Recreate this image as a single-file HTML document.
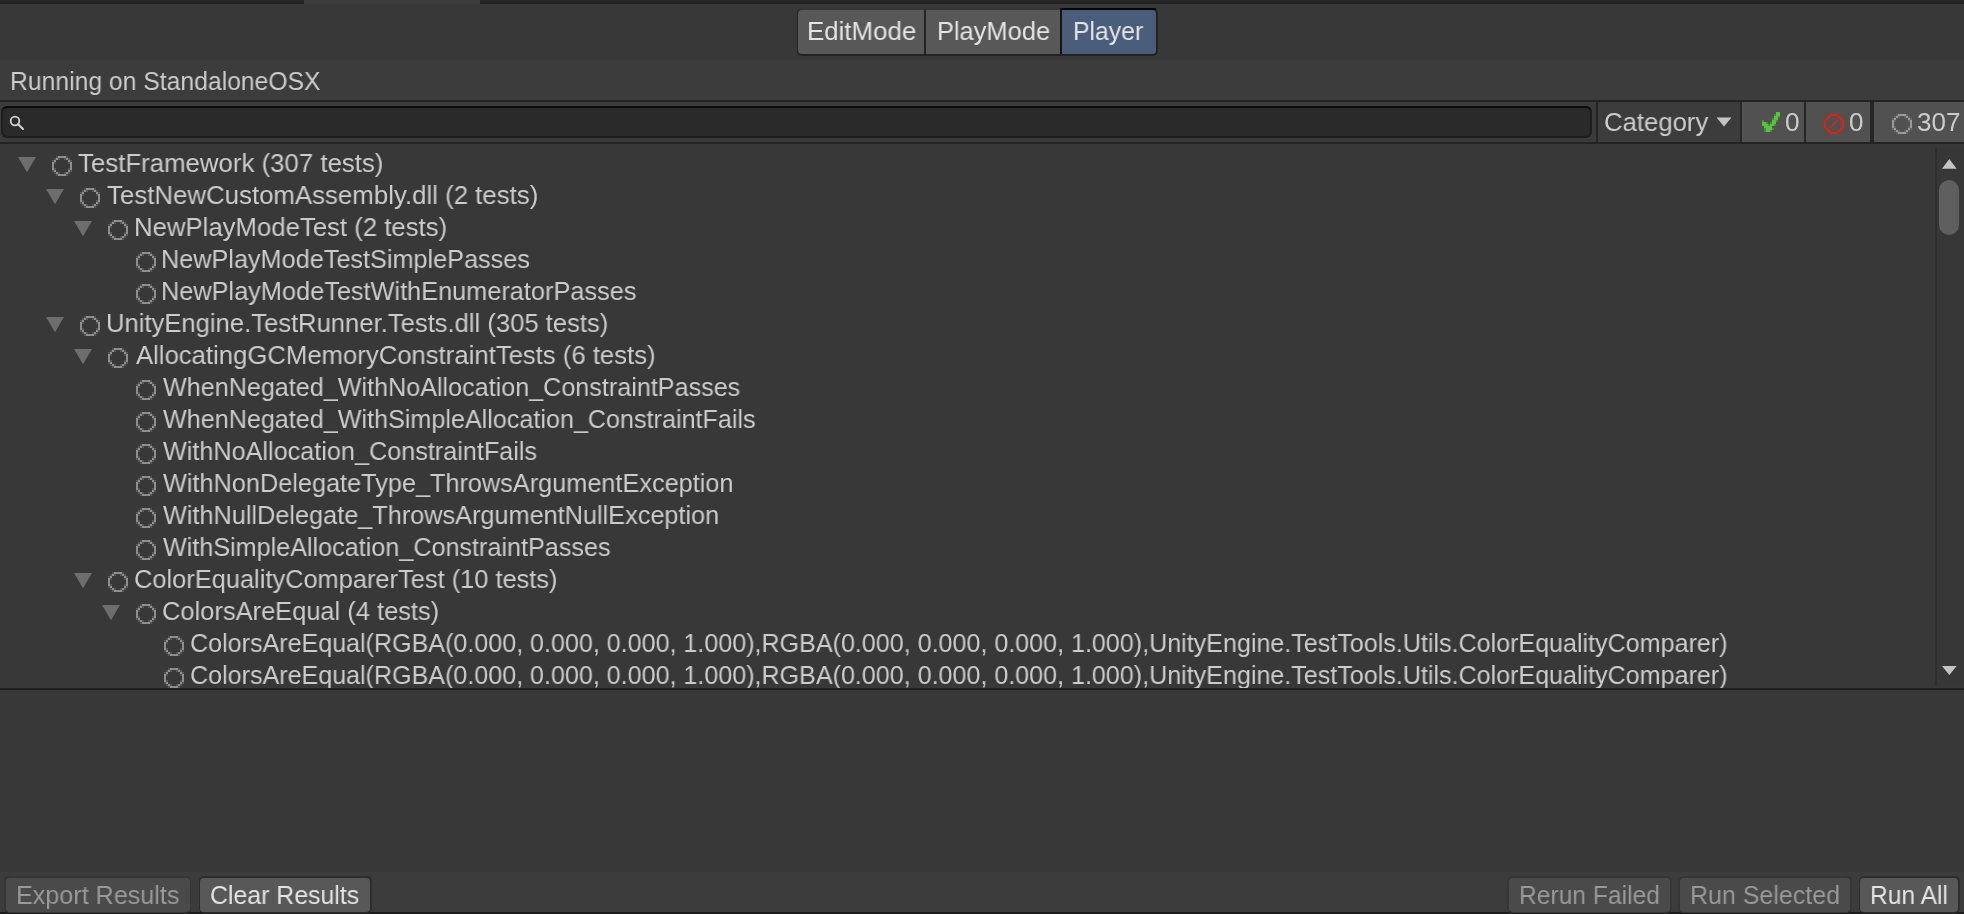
<!DOCTYPE html>
<html><head><meta charset="utf-8"><style>
html,body{margin:0;padding:0;width:1964px;height:914px;overflow:hidden;background:#383838;}
body{position:relative;font-family:"Liberation Sans",sans-serif;}
.b{position:absolute;}
.t{position:absolute;white-space:pre;will-change:transform;font-size:26px;line-height:32px;transform-origin:0 0;}
.ic{position:absolute;overflow:visible;}
</style></head><body>
<!-- top dock strip -->
<div class="b" style="left:0;top:0;width:1964px;height:2px;background:#282828"></div>
<div class="b" style="left:0;top:2px;width:1964px;height:2px;background:#212121"></div>
<div class="b" style="left:304px;top:0;width:176px;height:4px;background:#3c3c3c"></div>
<!-- running-on band -->
<div class="b" style="left:0;top:60px;width:1964px;height:40px;background:#3c3c3c"></div>
<!-- segmented control -->
<div class="b" style="left:797px;top:8px;width:361px;height:48px;background:#232323;border-radius:5px"></div>
<div class="b" style="left:798px;top:10px;width:126px;height:44px;background:#585858;border-radius:4px 0 0 4px"></div>
<div class="b" style="left:926px;top:10px;width:134px;height:44px;background:#585858"></div>
<div class="b" style="left:1062px;top:10px;width:94px;height:44px;background:#4a5e7b;border-radius:0 4px 4px 0"></div>
<div class="b" style="left:797px;top:8px;width:263px;height:2px;background:#353535"></div>
<div class="b" style="left:1060px;top:8px;width:96px;height:2px;background:#060606"></div>
<div class="b" style="left:1060px;top:8px;width:2px;height:46px;background:#141414"></div>
<!-- toolbar -->
<div class="b" style="left:0;top:100px;width:1964px;height:2px;background:#232323"></div>
<div class="b" style="left:0;top:102px;width:1964px;height:40px;background:#3b3b3b"></div>
<div class="b" style="left:0;top:142px;width:1964px;height:2px;background:#232323"></div>
<div class="b" style="left:1px;top:106px;width:1591px;height:32px;background:#1e1e1e;border-radius:6px;box-sizing:border-box;border-top:2px solid #0c0c0c"></div>
<div class="b" style="left:3px;top:108px;width:1587px;height:28px;background:#2a2a2a;border-radius:5px"></div>
<svg class="ic" style="left:0;top:100px" width="40" height="40"><circle cx="15" cy="21" r="4.3" fill="none" stroke="#d2d2d2" stroke-width="1.8"/><line x1="18.2" y1="24.2" x2="23" y2="29" stroke="#d2d2d2" stroke-width="2" stroke-linecap="round"/></svg>
<div class="b" style="left:1596px;top:102px;width:2px;height:40px;background:#262626"></div>
<div class="b" style="left:1598px;top:102px;width:142px;height:40px;background:#3c3c3c"></div>
<div class="b" style="left:1740px;top:102px;width:2px;height:40px;background:#262626"></div>
<div class="b" style="left:1742px;top:102px;width:62px;height:40px;background:#515151"></div>
<div class="b" style="left:1804px;top:102px;width:2px;height:40px;background:#262626"></div>
<div class="b" style="left:1806px;top:102px;width:64px;height:40px;background:#515151"></div>
<div class="b" style="left:1870px;top:102px;width:4px;height:40px;background:#262626"></div>
<div class="b" style="left:1874px;top:102px;width:90px;height:40px;background:#515151"></div>
<svg class="ic" style="left:1716px;top:117px" width="16" height="10"><polygon points="0.5,0.5 15.5,0.5 8,9.5" fill="#c4c4c4"/></svg>
<svg class="ic" style="left:1762px;top:112px" width="18" height="20" shape-rendering="crispEdges"><rect x="14" y="0" width="2" height="2" fill="#55c639"/><rect x="16" y="0" width="2" height="2" fill="#55c639"/><rect x="14" y="2" width="2" height="2" fill="#55c639"/><rect x="16" y="2" width="2" height="2" fill="#55c639"/><rect x="12" y="4" width="2" height="2" fill="#55c639"/><rect x="14" y="4" width="2" height="2" fill="#55c639"/><rect x="12" y="6" width="2" height="2" fill="#55c639"/><rect x="14" y="6" width="2" height="2" fill="#55c639"/><rect x="10" y="8" width="2" height="2" fill="#55c639"/><rect x="12" y="8" width="2" height="2" fill="#55c639"/><rect x="0" y="10" width="2" height="2" fill="#55c639"/><rect x="2" y="10" width="2" height="2" fill="#55c639"/><rect x="10" y="10" width="2" height="2" fill="#55c639"/><rect x="12" y="10" width="2" height="2" fill="#55c639"/><rect x="0" y="12" width="2" height="2" fill="#55c639"/><rect x="2" y="12" width="2" height="2" fill="#55c639"/><rect x="4" y="12" width="2" height="2" fill="#55c639"/><rect x="8" y="12" width="2" height="2" fill="#55c639"/><rect x="10" y="12" width="2" height="2" fill="#55c639"/><rect x="2" y="14" width="2" height="2" fill="#55c639"/><rect x="4" y="14" width="2" height="2" fill="#55c639"/><rect x="6" y="14" width="2" height="2" fill="#55c639"/><rect x="8" y="14" width="2" height="2" fill="#55c639"/><rect x="4" y="16" width="2" height="2" fill="#55c639"/><rect x="6" y="16" width="2" height="2" fill="#55c639"/><rect x="8" y="16" width="2" height="2" fill="#55c639"/><rect x="4" y="18" width="2" height="2" fill="#55c639"/><rect x="6" y="18" width="2" height="2" fill="#55c639"/><rect x="12" y="2" width="2" height="2" fill="#4c8a3e"/><rect x="16" y="4" width="2" height="2" fill="#4c8a3e"/><rect x="10" y="6" width="2" height="2" fill="#4c8a3e"/><rect x="0" y="8" width="2" height="2" fill="#4c8a3e"/><rect x="14" y="8" width="2" height="2" fill="#4c8a3e"/><rect x="4" y="10" width="2" height="2" fill="#4c8a3e"/><rect x="8" y="10" width="2" height="2" fill="#4c8a3e"/><rect x="6" y="12" width="2" height="2" fill="#4c8a3e"/><rect x="12" y="12" width="2" height="2" fill="#4c8a3e"/><rect x="2" y="16" width="2" height="2" fill="#4c8a3e"/><rect x="10" y="16" width="2" height="2" fill="#4c8a3e"/><rect x="2" y="18" width="2" height="2" fill="#4c8a3e"/><rect x="8" y="18" width="2" height="2" fill="#4c8a3e"/></svg>
<svg class="ic" style="left:1824px;top:114px" width="20" height="20" shape-rendering="crispEdges"><rect x="6" y="0" width="2" height="2" fill="#d3261a"/><rect x="8" y="0" width="2" height="2" fill="#d3261a"/><rect x="10" y="0" width="2" height="2" fill="#d3261a"/><rect x="12" y="0" width="2" height="2" fill="#d3261a"/><rect x="6" y="18" width="2" height="2" fill="#d3261a"/><rect x="8" y="18" width="2" height="2" fill="#d3261a"/><rect x="10" y="18" width="2" height="2" fill="#d3261a"/><rect x="12" y="18" width="2" height="2" fill="#d3261a"/><rect x="0" y="6" width="2" height="2" fill="#d3261a"/><rect x="0" y="8" width="2" height="2" fill="#d3261a"/><rect x="0" y="10" width="2" height="2" fill="#d3261a"/><rect x="0" y="12" width="2" height="2" fill="#d3261a"/><rect x="18" y="6" width="2" height="2" fill="#d3261a"/><rect x="18" y="8" width="2" height="2" fill="#d3261a"/><rect x="18" y="10" width="2" height="2" fill="#d3261a"/><rect x="18" y="12" width="2" height="2" fill="#d3261a"/><rect x="4" y="2" width="2" height="2" fill="#d3261a"/><rect x="14" y="2" width="2" height="2" fill="#d3261a"/><rect x="2" y="4" width="2" height="2" fill="#d3261a"/><rect x="16" y="4" width="2" height="2" fill="#d3261a"/><rect x="2" y="14" width="2" height="2" fill="#d3261a"/><rect x="16" y="14" width="2" height="2" fill="#d3261a"/><rect x="4" y="16" width="2" height="2" fill="#d3261a"/><rect x="14" y="16" width="2" height="2" fill="#d3261a"/><rect x="12" y="6" width="2" height="2" fill="#d3261a"/><rect x="10" y="8" width="2" height="2" fill="#d3261a"/><rect x="8" y="10" width="2" height="2" fill="#d3261a"/><rect x="6" y="12" width="2" height="2" fill="#d3261a"/><rect x="4" y="0" width="2" height="2" fill="#8e3a33"/><rect x="14" y="0" width="2" height="2" fill="#8e3a33"/><rect x="4" y="18" width="2" height="2" fill="#8e3a33"/><rect x="14" y="18" width="2" height="2" fill="#8e3a33"/><rect x="0" y="4" width="2" height="2" fill="#8e3a33"/><rect x="0" y="14" width="2" height="2" fill="#8e3a33"/><rect x="18" y="4" width="2" height="2" fill="#8e3a33"/><rect x="18" y="14" width="2" height="2" fill="#8e3a33"/><rect x="2" y="2" width="2" height="2" fill="#8e3a33"/><rect x="16" y="2" width="2" height="2" fill="#8e3a33"/><rect x="2" y="16" width="2" height="2" fill="#8e3a33"/><rect x="16" y="16" width="2" height="2" fill="#8e3a33"/><rect x="6" y="2" width="2" height="2" fill="#8e3a33"/><rect x="12" y="2" width="2" height="2" fill="#8e3a33"/><rect x="6" y="16" width="2" height="2" fill="#8e3a33"/><rect x="12" y="16" width="2" height="2" fill="#8e3a33"/><rect x="2" y="6" width="2" height="2" fill="#8e3a33"/><rect x="2" y="12" width="2" height="2" fill="#8e3a33"/><rect x="16" y="6" width="2" height="2" fill="#8e3a33"/><rect x="16" y="12" width="2" height="2" fill="#8e3a33"/></svg>
<svg class="ic" style="left:1892px;top:114px" width="20" height="20" shape-rendering="crispEdges"><rect x="6" y="0" width="2" height="2" fill="#9a9a9a"/><rect x="8" y="0" width="2" height="2" fill="#9a9a9a"/><rect x="10" y="0" width="2" height="2" fill="#9a9a9a"/><rect x="12" y="0" width="2" height="2" fill="#9a9a9a"/><rect x="6" y="18" width="2" height="2" fill="#9a9a9a"/><rect x="8" y="18" width="2" height="2" fill="#9a9a9a"/><rect x="10" y="18" width="2" height="2" fill="#9a9a9a"/><rect x="12" y="18" width="2" height="2" fill="#9a9a9a"/><rect x="0" y="6" width="2" height="2" fill="#9a9a9a"/><rect x="0" y="8" width="2" height="2" fill="#9a9a9a"/><rect x="0" y="10" width="2" height="2" fill="#9a9a9a"/><rect x="0" y="12" width="2" height="2" fill="#9a9a9a"/><rect x="18" y="6" width="2" height="2" fill="#9a9a9a"/><rect x="18" y="8" width="2" height="2" fill="#9a9a9a"/><rect x="18" y="10" width="2" height="2" fill="#9a9a9a"/><rect x="18" y="12" width="2" height="2" fill="#9a9a9a"/><rect x="4" y="2" width="2" height="2" fill="#9a9a9a"/><rect x="14" y="2" width="2" height="2" fill="#9a9a9a"/><rect x="2" y="4" width="2" height="2" fill="#9a9a9a"/><rect x="16" y="4" width="2" height="2" fill="#9a9a9a"/><rect x="2" y="14" width="2" height="2" fill="#9a9a9a"/><rect x="16" y="14" width="2" height="2" fill="#9a9a9a"/><rect x="4" y="16" width="2" height="2" fill="#9a9a9a"/><rect x="14" y="16" width="2" height="2" fill="#9a9a9a"/><rect x="4" y="0" width="2" height="2" fill="#666666"/><rect x="14" y="0" width="2" height="2" fill="#666666"/><rect x="4" y="18" width="2" height="2" fill="#666666"/><rect x="14" y="18" width="2" height="2" fill="#666666"/><rect x="0" y="4" width="2" height="2" fill="#666666"/><rect x="0" y="14" width="2" height="2" fill="#666666"/><rect x="18" y="4" width="2" height="2" fill="#666666"/><rect x="18" y="14" width="2" height="2" fill="#666666"/><rect x="2" y="2" width="2" height="2" fill="#666666"/><rect x="16" y="2" width="2" height="2" fill="#666666"/><rect x="2" y="16" width="2" height="2" fill="#666666"/><rect x="16" y="16" width="2" height="2" fill="#666666"/><rect x="6" y="2" width="2" height="2" fill="#666666"/><rect x="12" y="2" width="2" height="2" fill="#666666"/><rect x="6" y="16" width="2" height="2" fill="#666666"/><rect x="12" y="16" width="2" height="2" fill="#666666"/><rect x="2" y="6" width="2" height="2" fill="#666666"/><rect x="2" y="12" width="2" height="2" fill="#666666"/><rect x="16" y="6" width="2" height="2" fill="#666666"/><rect x="16" y="12" width="2" height="2" fill="#666666"/></svg>
<div class="t" style="left:807.31px;top:14.70px;color:#e4e4e4;transform:scaleX(0.9939);">EditMode</div><div class="t" style="left:937.44px;top:14.70px;color:#e4e4e4;transform:scaleX(0.9778);">PlayMode</div><div class="t" style="left:1073.29px;top:14.70px;color:#e4e4e4;transform:scaleX(0.9530);">Player</div><div class="t" style="left:10.00px;top:64.60px;color:#cccccc;transform:scaleX(0.9506);">Running on StandaloneOSX</div><div class="t" style="left:1603.76px;top:105.90px;color:#cccccc;transform:scaleX(0.9880);">Category</div><div class="t" style="left:1784.99px;top:105.90px;color:#cccccc;transform:scaleX(1.0080);">0</div><div class="t" style="left:1848.71px;top:105.90px;color:#cccccc;transform:scaleX(0.9920);">0</div><div class="t" style="left:1916.60px;top:105.90px;color:#cccccc;transform:scaleX(0.9964);">307</div>
<!-- tree -->
<div class="b" style="left:0;top:144px;width:1964px;height:544px;background:#383838;overflow:hidden">
</div>
<div class="b" style="left:0;top:144px;width:1935px;height:544px;overflow:hidden">
<div style="position:absolute;left:0;top:-144px;width:1964px;height:914px">
<div class="t" style="left:78.30px;top:146.70px;color:#cccccc;transform:scaleX(0.9925);">TestFramework (307 tests)</div><svg class="ic" style="left:52px;top:156px" width="20" height="20" shape-rendering="crispEdges"><rect x="6" y="0" width="2" height="2" fill="#8e8e8e"/><rect x="8" y="0" width="2" height="2" fill="#8e8e8e"/><rect x="10" y="0" width="2" height="2" fill="#8e8e8e"/><rect x="12" y="0" width="2" height="2" fill="#8e8e8e"/><rect x="6" y="18" width="2" height="2" fill="#8e8e8e"/><rect x="8" y="18" width="2" height="2" fill="#8e8e8e"/><rect x="10" y="18" width="2" height="2" fill="#8e8e8e"/><rect x="12" y="18" width="2" height="2" fill="#8e8e8e"/><rect x="0" y="6" width="2" height="2" fill="#8e8e8e"/><rect x="0" y="8" width="2" height="2" fill="#8e8e8e"/><rect x="0" y="10" width="2" height="2" fill="#8e8e8e"/><rect x="0" y="12" width="2" height="2" fill="#8e8e8e"/><rect x="18" y="6" width="2" height="2" fill="#8e8e8e"/><rect x="18" y="8" width="2" height="2" fill="#8e8e8e"/><rect x="18" y="10" width="2" height="2" fill="#8e8e8e"/><rect x="18" y="12" width="2" height="2" fill="#8e8e8e"/><rect x="4" y="2" width="2" height="2" fill="#8e8e8e"/><rect x="14" y="2" width="2" height="2" fill="#8e8e8e"/><rect x="2" y="4" width="2" height="2" fill="#8e8e8e"/><rect x="16" y="4" width="2" height="2" fill="#8e8e8e"/><rect x="2" y="14" width="2" height="2" fill="#8e8e8e"/><rect x="16" y="14" width="2" height="2" fill="#8e8e8e"/><rect x="4" y="16" width="2" height="2" fill="#8e8e8e"/><rect x="14" y="16" width="2" height="2" fill="#8e8e8e"/><rect x="4" y="0" width="2" height="2" fill="#555555"/><rect x="14" y="0" width="2" height="2" fill="#555555"/><rect x="4" y="18" width="2" height="2" fill="#555555"/><rect x="14" y="18" width="2" height="2" fill="#555555"/><rect x="0" y="4" width="2" height="2" fill="#555555"/><rect x="0" y="14" width="2" height="2" fill="#555555"/><rect x="18" y="4" width="2" height="2" fill="#555555"/><rect x="18" y="14" width="2" height="2" fill="#555555"/><rect x="2" y="2" width="2" height="2" fill="#555555"/><rect x="16" y="2" width="2" height="2" fill="#555555"/><rect x="2" y="16" width="2" height="2" fill="#555555"/><rect x="16" y="16" width="2" height="2" fill="#555555"/><rect x="6" y="2" width="2" height="2" fill="#555555"/><rect x="12" y="2" width="2" height="2" fill="#555555"/><rect x="6" y="16" width="2" height="2" fill="#555555"/><rect x="12" y="16" width="2" height="2" fill="#555555"/><rect x="2" y="6" width="2" height="2" fill="#555555"/><rect x="2" y="12" width="2" height="2" fill="#555555"/><rect x="16" y="6" width="2" height="2" fill="#555555"/><rect x="16" y="12" width="2" height="2" fill="#555555"/></svg><svg class="ic" style="left:18px;top:157.0px" width="18" height="16"><polygon points="0,0 18,0 9,15.3" fill="#6d6d6d"/></svg><div class="t" style="left:107.30px;top:178.70px;color:#cccccc;transform:scaleX(0.9929);">TestNewCustomAssembly.dll (2 tests)</div><svg class="ic" style="left:80px;top:188px" width="20" height="20" shape-rendering="crispEdges"><rect x="6" y="0" width="2" height="2" fill="#8e8e8e"/><rect x="8" y="0" width="2" height="2" fill="#8e8e8e"/><rect x="10" y="0" width="2" height="2" fill="#8e8e8e"/><rect x="12" y="0" width="2" height="2" fill="#8e8e8e"/><rect x="6" y="18" width="2" height="2" fill="#8e8e8e"/><rect x="8" y="18" width="2" height="2" fill="#8e8e8e"/><rect x="10" y="18" width="2" height="2" fill="#8e8e8e"/><rect x="12" y="18" width="2" height="2" fill="#8e8e8e"/><rect x="0" y="6" width="2" height="2" fill="#8e8e8e"/><rect x="0" y="8" width="2" height="2" fill="#8e8e8e"/><rect x="0" y="10" width="2" height="2" fill="#8e8e8e"/><rect x="0" y="12" width="2" height="2" fill="#8e8e8e"/><rect x="18" y="6" width="2" height="2" fill="#8e8e8e"/><rect x="18" y="8" width="2" height="2" fill="#8e8e8e"/><rect x="18" y="10" width="2" height="2" fill="#8e8e8e"/><rect x="18" y="12" width="2" height="2" fill="#8e8e8e"/><rect x="4" y="2" width="2" height="2" fill="#8e8e8e"/><rect x="14" y="2" width="2" height="2" fill="#8e8e8e"/><rect x="2" y="4" width="2" height="2" fill="#8e8e8e"/><rect x="16" y="4" width="2" height="2" fill="#8e8e8e"/><rect x="2" y="14" width="2" height="2" fill="#8e8e8e"/><rect x="16" y="14" width="2" height="2" fill="#8e8e8e"/><rect x="4" y="16" width="2" height="2" fill="#8e8e8e"/><rect x="14" y="16" width="2" height="2" fill="#8e8e8e"/><rect x="4" y="0" width="2" height="2" fill="#555555"/><rect x="14" y="0" width="2" height="2" fill="#555555"/><rect x="4" y="18" width="2" height="2" fill="#555555"/><rect x="14" y="18" width="2" height="2" fill="#555555"/><rect x="0" y="4" width="2" height="2" fill="#555555"/><rect x="0" y="14" width="2" height="2" fill="#555555"/><rect x="18" y="4" width="2" height="2" fill="#555555"/><rect x="18" y="14" width="2" height="2" fill="#555555"/><rect x="2" y="2" width="2" height="2" fill="#555555"/><rect x="16" y="2" width="2" height="2" fill="#555555"/><rect x="2" y="16" width="2" height="2" fill="#555555"/><rect x="16" y="16" width="2" height="2" fill="#555555"/><rect x="6" y="2" width="2" height="2" fill="#555555"/><rect x="12" y="2" width="2" height="2" fill="#555555"/><rect x="6" y="16" width="2" height="2" fill="#555555"/><rect x="12" y="16" width="2" height="2" fill="#555555"/><rect x="2" y="6" width="2" height="2" fill="#555555"/><rect x="2" y="12" width="2" height="2" fill="#555555"/><rect x="16" y="6" width="2" height="2" fill="#555555"/><rect x="16" y="12" width="2" height="2" fill="#555555"/></svg><svg class="ic" style="left:46px;top:189.0px" width="18" height="16"><polygon points="0,0 18,0 9,15.3" fill="#6d6d6d"/></svg><div class="t" style="left:133.52px;top:210.70px;color:#cccccc;transform:scaleX(0.9896);">NewPlayModeTest (2 tests)</div><svg class="ic" style="left:108px;top:220px" width="20" height="20" shape-rendering="crispEdges"><rect x="6" y="0" width="2" height="2" fill="#8e8e8e"/><rect x="8" y="0" width="2" height="2" fill="#8e8e8e"/><rect x="10" y="0" width="2" height="2" fill="#8e8e8e"/><rect x="12" y="0" width="2" height="2" fill="#8e8e8e"/><rect x="6" y="18" width="2" height="2" fill="#8e8e8e"/><rect x="8" y="18" width="2" height="2" fill="#8e8e8e"/><rect x="10" y="18" width="2" height="2" fill="#8e8e8e"/><rect x="12" y="18" width="2" height="2" fill="#8e8e8e"/><rect x="0" y="6" width="2" height="2" fill="#8e8e8e"/><rect x="0" y="8" width="2" height="2" fill="#8e8e8e"/><rect x="0" y="10" width="2" height="2" fill="#8e8e8e"/><rect x="0" y="12" width="2" height="2" fill="#8e8e8e"/><rect x="18" y="6" width="2" height="2" fill="#8e8e8e"/><rect x="18" y="8" width="2" height="2" fill="#8e8e8e"/><rect x="18" y="10" width="2" height="2" fill="#8e8e8e"/><rect x="18" y="12" width="2" height="2" fill="#8e8e8e"/><rect x="4" y="2" width="2" height="2" fill="#8e8e8e"/><rect x="14" y="2" width="2" height="2" fill="#8e8e8e"/><rect x="2" y="4" width="2" height="2" fill="#8e8e8e"/><rect x="16" y="4" width="2" height="2" fill="#8e8e8e"/><rect x="2" y="14" width="2" height="2" fill="#8e8e8e"/><rect x="16" y="14" width="2" height="2" fill="#8e8e8e"/><rect x="4" y="16" width="2" height="2" fill="#8e8e8e"/><rect x="14" y="16" width="2" height="2" fill="#8e8e8e"/><rect x="4" y="0" width="2" height="2" fill="#555555"/><rect x="14" y="0" width="2" height="2" fill="#555555"/><rect x="4" y="18" width="2" height="2" fill="#555555"/><rect x="14" y="18" width="2" height="2" fill="#555555"/><rect x="0" y="4" width="2" height="2" fill="#555555"/><rect x="0" y="14" width="2" height="2" fill="#555555"/><rect x="18" y="4" width="2" height="2" fill="#555555"/><rect x="18" y="14" width="2" height="2" fill="#555555"/><rect x="2" y="2" width="2" height="2" fill="#555555"/><rect x="16" y="2" width="2" height="2" fill="#555555"/><rect x="2" y="16" width="2" height="2" fill="#555555"/><rect x="16" y="16" width="2" height="2" fill="#555555"/><rect x="6" y="2" width="2" height="2" fill="#555555"/><rect x="12" y="2" width="2" height="2" fill="#555555"/><rect x="6" y="16" width="2" height="2" fill="#555555"/><rect x="12" y="16" width="2" height="2" fill="#555555"/><rect x="2" y="6" width="2" height="2" fill="#555555"/><rect x="2" y="12" width="2" height="2" fill="#555555"/><rect x="16" y="6" width="2" height="2" fill="#555555"/><rect x="16" y="12" width="2" height="2" fill="#555555"/></svg><svg class="ic" style="left:74px;top:221.0px" width="18" height="16"><polygon points="0,0 18,0 9,15.3" fill="#6d6d6d"/></svg><div class="t" style="left:160.86px;top:242.70px;color:#cccccc;transform:scaleX(0.9708);">NewPlayModeTestSimplePasses</div><svg class="ic" style="left:136px;top:252px" width="20" height="20" shape-rendering="crispEdges"><rect x="6" y="0" width="2" height="2" fill="#8e8e8e"/><rect x="8" y="0" width="2" height="2" fill="#8e8e8e"/><rect x="10" y="0" width="2" height="2" fill="#8e8e8e"/><rect x="12" y="0" width="2" height="2" fill="#8e8e8e"/><rect x="6" y="18" width="2" height="2" fill="#8e8e8e"/><rect x="8" y="18" width="2" height="2" fill="#8e8e8e"/><rect x="10" y="18" width="2" height="2" fill="#8e8e8e"/><rect x="12" y="18" width="2" height="2" fill="#8e8e8e"/><rect x="0" y="6" width="2" height="2" fill="#8e8e8e"/><rect x="0" y="8" width="2" height="2" fill="#8e8e8e"/><rect x="0" y="10" width="2" height="2" fill="#8e8e8e"/><rect x="0" y="12" width="2" height="2" fill="#8e8e8e"/><rect x="18" y="6" width="2" height="2" fill="#8e8e8e"/><rect x="18" y="8" width="2" height="2" fill="#8e8e8e"/><rect x="18" y="10" width="2" height="2" fill="#8e8e8e"/><rect x="18" y="12" width="2" height="2" fill="#8e8e8e"/><rect x="4" y="2" width="2" height="2" fill="#8e8e8e"/><rect x="14" y="2" width="2" height="2" fill="#8e8e8e"/><rect x="2" y="4" width="2" height="2" fill="#8e8e8e"/><rect x="16" y="4" width="2" height="2" fill="#8e8e8e"/><rect x="2" y="14" width="2" height="2" fill="#8e8e8e"/><rect x="16" y="14" width="2" height="2" fill="#8e8e8e"/><rect x="4" y="16" width="2" height="2" fill="#8e8e8e"/><rect x="14" y="16" width="2" height="2" fill="#8e8e8e"/><rect x="4" y="0" width="2" height="2" fill="#555555"/><rect x="14" y="0" width="2" height="2" fill="#555555"/><rect x="4" y="18" width="2" height="2" fill="#555555"/><rect x="14" y="18" width="2" height="2" fill="#555555"/><rect x="0" y="4" width="2" height="2" fill="#555555"/><rect x="0" y="14" width="2" height="2" fill="#555555"/><rect x="18" y="4" width="2" height="2" fill="#555555"/><rect x="18" y="14" width="2" height="2" fill="#555555"/><rect x="2" y="2" width="2" height="2" fill="#555555"/><rect x="16" y="2" width="2" height="2" fill="#555555"/><rect x="2" y="16" width="2" height="2" fill="#555555"/><rect x="16" y="16" width="2" height="2" fill="#555555"/><rect x="6" y="2" width="2" height="2" fill="#555555"/><rect x="12" y="2" width="2" height="2" fill="#555555"/><rect x="6" y="16" width="2" height="2" fill="#555555"/><rect x="12" y="16" width="2" height="2" fill="#555555"/><rect x="2" y="6" width="2" height="2" fill="#555555"/><rect x="2" y="12" width="2" height="2" fill="#555555"/><rect x="16" y="6" width="2" height="2" fill="#555555"/><rect x="16" y="12" width="2" height="2" fill="#555555"/></svg><div class="t" style="left:160.85px;top:274.70px;color:#cccccc;transform:scaleX(0.9734);">NewPlayModeTestWithEnumeratorPasses</div><svg class="ic" style="left:136px;top:284px" width="20" height="20" shape-rendering="crispEdges"><rect x="6" y="0" width="2" height="2" fill="#8e8e8e"/><rect x="8" y="0" width="2" height="2" fill="#8e8e8e"/><rect x="10" y="0" width="2" height="2" fill="#8e8e8e"/><rect x="12" y="0" width="2" height="2" fill="#8e8e8e"/><rect x="6" y="18" width="2" height="2" fill="#8e8e8e"/><rect x="8" y="18" width="2" height="2" fill="#8e8e8e"/><rect x="10" y="18" width="2" height="2" fill="#8e8e8e"/><rect x="12" y="18" width="2" height="2" fill="#8e8e8e"/><rect x="0" y="6" width="2" height="2" fill="#8e8e8e"/><rect x="0" y="8" width="2" height="2" fill="#8e8e8e"/><rect x="0" y="10" width="2" height="2" fill="#8e8e8e"/><rect x="0" y="12" width="2" height="2" fill="#8e8e8e"/><rect x="18" y="6" width="2" height="2" fill="#8e8e8e"/><rect x="18" y="8" width="2" height="2" fill="#8e8e8e"/><rect x="18" y="10" width="2" height="2" fill="#8e8e8e"/><rect x="18" y="12" width="2" height="2" fill="#8e8e8e"/><rect x="4" y="2" width="2" height="2" fill="#8e8e8e"/><rect x="14" y="2" width="2" height="2" fill="#8e8e8e"/><rect x="2" y="4" width="2" height="2" fill="#8e8e8e"/><rect x="16" y="4" width="2" height="2" fill="#8e8e8e"/><rect x="2" y="14" width="2" height="2" fill="#8e8e8e"/><rect x="16" y="14" width="2" height="2" fill="#8e8e8e"/><rect x="4" y="16" width="2" height="2" fill="#8e8e8e"/><rect x="14" y="16" width="2" height="2" fill="#8e8e8e"/><rect x="4" y="0" width="2" height="2" fill="#555555"/><rect x="14" y="0" width="2" height="2" fill="#555555"/><rect x="4" y="18" width="2" height="2" fill="#555555"/><rect x="14" y="18" width="2" height="2" fill="#555555"/><rect x="0" y="4" width="2" height="2" fill="#555555"/><rect x="0" y="14" width="2" height="2" fill="#555555"/><rect x="18" y="4" width="2" height="2" fill="#555555"/><rect x="18" y="14" width="2" height="2" fill="#555555"/><rect x="2" y="2" width="2" height="2" fill="#555555"/><rect x="16" y="2" width="2" height="2" fill="#555555"/><rect x="2" y="16" width="2" height="2" fill="#555555"/><rect x="16" y="16" width="2" height="2" fill="#555555"/><rect x="6" y="2" width="2" height="2" fill="#555555"/><rect x="12" y="2" width="2" height="2" fill="#555555"/><rect x="6" y="16" width="2" height="2" fill="#555555"/><rect x="12" y="16" width="2" height="2" fill="#555555"/><rect x="2" y="6" width="2" height="2" fill="#555555"/><rect x="2" y="12" width="2" height="2" fill="#555555"/><rect x="16" y="6" width="2" height="2" fill="#555555"/><rect x="16" y="12" width="2" height="2" fill="#555555"/></svg><div class="t" style="left:105.83px;top:306.70px;color:#cccccc;transform:scaleX(0.9846);">UnityEngine.TestRunner.Tests.dll (305 tests)</div><svg class="ic" style="left:80px;top:316px" width="20" height="20" shape-rendering="crispEdges"><rect x="6" y="0" width="2" height="2" fill="#8e8e8e"/><rect x="8" y="0" width="2" height="2" fill="#8e8e8e"/><rect x="10" y="0" width="2" height="2" fill="#8e8e8e"/><rect x="12" y="0" width="2" height="2" fill="#8e8e8e"/><rect x="6" y="18" width="2" height="2" fill="#8e8e8e"/><rect x="8" y="18" width="2" height="2" fill="#8e8e8e"/><rect x="10" y="18" width="2" height="2" fill="#8e8e8e"/><rect x="12" y="18" width="2" height="2" fill="#8e8e8e"/><rect x="0" y="6" width="2" height="2" fill="#8e8e8e"/><rect x="0" y="8" width="2" height="2" fill="#8e8e8e"/><rect x="0" y="10" width="2" height="2" fill="#8e8e8e"/><rect x="0" y="12" width="2" height="2" fill="#8e8e8e"/><rect x="18" y="6" width="2" height="2" fill="#8e8e8e"/><rect x="18" y="8" width="2" height="2" fill="#8e8e8e"/><rect x="18" y="10" width="2" height="2" fill="#8e8e8e"/><rect x="18" y="12" width="2" height="2" fill="#8e8e8e"/><rect x="4" y="2" width="2" height="2" fill="#8e8e8e"/><rect x="14" y="2" width="2" height="2" fill="#8e8e8e"/><rect x="2" y="4" width="2" height="2" fill="#8e8e8e"/><rect x="16" y="4" width="2" height="2" fill="#8e8e8e"/><rect x="2" y="14" width="2" height="2" fill="#8e8e8e"/><rect x="16" y="14" width="2" height="2" fill="#8e8e8e"/><rect x="4" y="16" width="2" height="2" fill="#8e8e8e"/><rect x="14" y="16" width="2" height="2" fill="#8e8e8e"/><rect x="4" y="0" width="2" height="2" fill="#555555"/><rect x="14" y="0" width="2" height="2" fill="#555555"/><rect x="4" y="18" width="2" height="2" fill="#555555"/><rect x="14" y="18" width="2" height="2" fill="#555555"/><rect x="0" y="4" width="2" height="2" fill="#555555"/><rect x="0" y="14" width="2" height="2" fill="#555555"/><rect x="18" y="4" width="2" height="2" fill="#555555"/><rect x="18" y="14" width="2" height="2" fill="#555555"/><rect x="2" y="2" width="2" height="2" fill="#555555"/><rect x="16" y="2" width="2" height="2" fill="#555555"/><rect x="2" y="16" width="2" height="2" fill="#555555"/><rect x="16" y="16" width="2" height="2" fill="#555555"/><rect x="6" y="2" width="2" height="2" fill="#555555"/><rect x="12" y="2" width="2" height="2" fill="#555555"/><rect x="6" y="16" width="2" height="2" fill="#555555"/><rect x="12" y="16" width="2" height="2" fill="#555555"/><rect x="2" y="6" width="2" height="2" fill="#555555"/><rect x="2" y="12" width="2" height="2" fill="#555555"/><rect x="16" y="6" width="2" height="2" fill="#555555"/><rect x="16" y="12" width="2" height="2" fill="#555555"/></svg><svg class="ic" style="left:46px;top:317.0px" width="18" height="16"><polygon points="0,0 18,0 9,15.3" fill="#6d6d6d"/></svg><div class="t" style="left:135.50px;top:338.70px;color:#cccccc;transform:scaleX(0.9879);">AllocatingGCMemoryConstraintTests (6 tests)</div><svg class="ic" style="left:108px;top:348px" width="20" height="20" shape-rendering="crispEdges"><rect x="6" y="0" width="2" height="2" fill="#8e8e8e"/><rect x="8" y="0" width="2" height="2" fill="#8e8e8e"/><rect x="10" y="0" width="2" height="2" fill="#8e8e8e"/><rect x="12" y="0" width="2" height="2" fill="#8e8e8e"/><rect x="6" y="18" width="2" height="2" fill="#8e8e8e"/><rect x="8" y="18" width="2" height="2" fill="#8e8e8e"/><rect x="10" y="18" width="2" height="2" fill="#8e8e8e"/><rect x="12" y="18" width="2" height="2" fill="#8e8e8e"/><rect x="0" y="6" width="2" height="2" fill="#8e8e8e"/><rect x="0" y="8" width="2" height="2" fill="#8e8e8e"/><rect x="0" y="10" width="2" height="2" fill="#8e8e8e"/><rect x="0" y="12" width="2" height="2" fill="#8e8e8e"/><rect x="18" y="6" width="2" height="2" fill="#8e8e8e"/><rect x="18" y="8" width="2" height="2" fill="#8e8e8e"/><rect x="18" y="10" width="2" height="2" fill="#8e8e8e"/><rect x="18" y="12" width="2" height="2" fill="#8e8e8e"/><rect x="4" y="2" width="2" height="2" fill="#8e8e8e"/><rect x="14" y="2" width="2" height="2" fill="#8e8e8e"/><rect x="2" y="4" width="2" height="2" fill="#8e8e8e"/><rect x="16" y="4" width="2" height="2" fill="#8e8e8e"/><rect x="2" y="14" width="2" height="2" fill="#8e8e8e"/><rect x="16" y="14" width="2" height="2" fill="#8e8e8e"/><rect x="4" y="16" width="2" height="2" fill="#8e8e8e"/><rect x="14" y="16" width="2" height="2" fill="#8e8e8e"/><rect x="4" y="0" width="2" height="2" fill="#555555"/><rect x="14" y="0" width="2" height="2" fill="#555555"/><rect x="4" y="18" width="2" height="2" fill="#555555"/><rect x="14" y="18" width="2" height="2" fill="#555555"/><rect x="0" y="4" width="2" height="2" fill="#555555"/><rect x="0" y="14" width="2" height="2" fill="#555555"/><rect x="18" y="4" width="2" height="2" fill="#555555"/><rect x="18" y="14" width="2" height="2" fill="#555555"/><rect x="2" y="2" width="2" height="2" fill="#555555"/><rect x="16" y="2" width="2" height="2" fill="#555555"/><rect x="2" y="16" width="2" height="2" fill="#555555"/><rect x="16" y="16" width="2" height="2" fill="#555555"/><rect x="6" y="2" width="2" height="2" fill="#555555"/><rect x="12" y="2" width="2" height="2" fill="#555555"/><rect x="6" y="16" width="2" height="2" fill="#555555"/><rect x="12" y="16" width="2" height="2" fill="#555555"/><rect x="2" y="6" width="2" height="2" fill="#555555"/><rect x="2" y="12" width="2" height="2" fill="#555555"/><rect x="16" y="6" width="2" height="2" fill="#555555"/><rect x="16" y="12" width="2" height="2" fill="#555555"/></svg><svg class="ic" style="left:74px;top:349.0px" width="18" height="16"><polygon points="0,0 18,0 9,15.3" fill="#6d6d6d"/></svg><div class="t" style="left:162.80px;top:370.70px;color:#cccccc;transform:scaleX(0.9671);">WhenNegated_WithNoAllocation_ConstraintPasses</div><svg class="ic" style="left:136px;top:380px" width="20" height="20" shape-rendering="crispEdges"><rect x="6" y="0" width="2" height="2" fill="#8e8e8e"/><rect x="8" y="0" width="2" height="2" fill="#8e8e8e"/><rect x="10" y="0" width="2" height="2" fill="#8e8e8e"/><rect x="12" y="0" width="2" height="2" fill="#8e8e8e"/><rect x="6" y="18" width="2" height="2" fill="#8e8e8e"/><rect x="8" y="18" width="2" height="2" fill="#8e8e8e"/><rect x="10" y="18" width="2" height="2" fill="#8e8e8e"/><rect x="12" y="18" width="2" height="2" fill="#8e8e8e"/><rect x="0" y="6" width="2" height="2" fill="#8e8e8e"/><rect x="0" y="8" width="2" height="2" fill="#8e8e8e"/><rect x="0" y="10" width="2" height="2" fill="#8e8e8e"/><rect x="0" y="12" width="2" height="2" fill="#8e8e8e"/><rect x="18" y="6" width="2" height="2" fill="#8e8e8e"/><rect x="18" y="8" width="2" height="2" fill="#8e8e8e"/><rect x="18" y="10" width="2" height="2" fill="#8e8e8e"/><rect x="18" y="12" width="2" height="2" fill="#8e8e8e"/><rect x="4" y="2" width="2" height="2" fill="#8e8e8e"/><rect x="14" y="2" width="2" height="2" fill="#8e8e8e"/><rect x="2" y="4" width="2" height="2" fill="#8e8e8e"/><rect x="16" y="4" width="2" height="2" fill="#8e8e8e"/><rect x="2" y="14" width="2" height="2" fill="#8e8e8e"/><rect x="16" y="14" width="2" height="2" fill="#8e8e8e"/><rect x="4" y="16" width="2" height="2" fill="#8e8e8e"/><rect x="14" y="16" width="2" height="2" fill="#8e8e8e"/><rect x="4" y="0" width="2" height="2" fill="#555555"/><rect x="14" y="0" width="2" height="2" fill="#555555"/><rect x="4" y="18" width="2" height="2" fill="#555555"/><rect x="14" y="18" width="2" height="2" fill="#555555"/><rect x="0" y="4" width="2" height="2" fill="#555555"/><rect x="0" y="14" width="2" height="2" fill="#555555"/><rect x="18" y="4" width="2" height="2" fill="#555555"/><rect x="18" y="14" width="2" height="2" fill="#555555"/><rect x="2" y="2" width="2" height="2" fill="#555555"/><rect x="16" y="2" width="2" height="2" fill="#555555"/><rect x="2" y="16" width="2" height="2" fill="#555555"/><rect x="16" y="16" width="2" height="2" fill="#555555"/><rect x="6" y="2" width="2" height="2" fill="#555555"/><rect x="12" y="2" width="2" height="2" fill="#555555"/><rect x="6" y="16" width="2" height="2" fill="#555555"/><rect x="12" y="16" width="2" height="2" fill="#555555"/><rect x="2" y="6" width="2" height="2" fill="#555555"/><rect x="2" y="12" width="2" height="2" fill="#555555"/><rect x="16" y="6" width="2" height="2" fill="#555555"/><rect x="16" y="12" width="2" height="2" fill="#555555"/></svg><div class="t" style="left:162.80px;top:402.70px;color:#cccccc;transform:scaleX(0.9671);">WhenNegated_WithSimpleAllocation_ConstraintFails</div><svg class="ic" style="left:136px;top:412px" width="20" height="20" shape-rendering="crispEdges"><rect x="6" y="0" width="2" height="2" fill="#8e8e8e"/><rect x="8" y="0" width="2" height="2" fill="#8e8e8e"/><rect x="10" y="0" width="2" height="2" fill="#8e8e8e"/><rect x="12" y="0" width="2" height="2" fill="#8e8e8e"/><rect x="6" y="18" width="2" height="2" fill="#8e8e8e"/><rect x="8" y="18" width="2" height="2" fill="#8e8e8e"/><rect x="10" y="18" width="2" height="2" fill="#8e8e8e"/><rect x="12" y="18" width="2" height="2" fill="#8e8e8e"/><rect x="0" y="6" width="2" height="2" fill="#8e8e8e"/><rect x="0" y="8" width="2" height="2" fill="#8e8e8e"/><rect x="0" y="10" width="2" height="2" fill="#8e8e8e"/><rect x="0" y="12" width="2" height="2" fill="#8e8e8e"/><rect x="18" y="6" width="2" height="2" fill="#8e8e8e"/><rect x="18" y="8" width="2" height="2" fill="#8e8e8e"/><rect x="18" y="10" width="2" height="2" fill="#8e8e8e"/><rect x="18" y="12" width="2" height="2" fill="#8e8e8e"/><rect x="4" y="2" width="2" height="2" fill="#8e8e8e"/><rect x="14" y="2" width="2" height="2" fill="#8e8e8e"/><rect x="2" y="4" width="2" height="2" fill="#8e8e8e"/><rect x="16" y="4" width="2" height="2" fill="#8e8e8e"/><rect x="2" y="14" width="2" height="2" fill="#8e8e8e"/><rect x="16" y="14" width="2" height="2" fill="#8e8e8e"/><rect x="4" y="16" width="2" height="2" fill="#8e8e8e"/><rect x="14" y="16" width="2" height="2" fill="#8e8e8e"/><rect x="4" y="0" width="2" height="2" fill="#555555"/><rect x="14" y="0" width="2" height="2" fill="#555555"/><rect x="4" y="18" width="2" height="2" fill="#555555"/><rect x="14" y="18" width="2" height="2" fill="#555555"/><rect x="0" y="4" width="2" height="2" fill="#555555"/><rect x="0" y="14" width="2" height="2" fill="#555555"/><rect x="18" y="4" width="2" height="2" fill="#555555"/><rect x="18" y="14" width="2" height="2" fill="#555555"/><rect x="2" y="2" width="2" height="2" fill="#555555"/><rect x="16" y="2" width="2" height="2" fill="#555555"/><rect x="2" y="16" width="2" height="2" fill="#555555"/><rect x="16" y="16" width="2" height="2" fill="#555555"/><rect x="6" y="2" width="2" height="2" fill="#555555"/><rect x="12" y="2" width="2" height="2" fill="#555555"/><rect x="6" y="16" width="2" height="2" fill="#555555"/><rect x="12" y="16" width="2" height="2" fill="#555555"/><rect x="2" y="6" width="2" height="2" fill="#555555"/><rect x="2" y="12" width="2" height="2" fill="#555555"/><rect x="16" y="6" width="2" height="2" fill="#555555"/><rect x="16" y="12" width="2" height="2" fill="#555555"/></svg><div class="t" style="left:162.80px;top:434.70px;color:#cccccc;transform:scaleX(0.9695);">WithNoAllocation_ConstraintFails</div><svg class="ic" style="left:136px;top:444px" width="20" height="20" shape-rendering="crispEdges"><rect x="6" y="0" width="2" height="2" fill="#8e8e8e"/><rect x="8" y="0" width="2" height="2" fill="#8e8e8e"/><rect x="10" y="0" width="2" height="2" fill="#8e8e8e"/><rect x="12" y="0" width="2" height="2" fill="#8e8e8e"/><rect x="6" y="18" width="2" height="2" fill="#8e8e8e"/><rect x="8" y="18" width="2" height="2" fill="#8e8e8e"/><rect x="10" y="18" width="2" height="2" fill="#8e8e8e"/><rect x="12" y="18" width="2" height="2" fill="#8e8e8e"/><rect x="0" y="6" width="2" height="2" fill="#8e8e8e"/><rect x="0" y="8" width="2" height="2" fill="#8e8e8e"/><rect x="0" y="10" width="2" height="2" fill="#8e8e8e"/><rect x="0" y="12" width="2" height="2" fill="#8e8e8e"/><rect x="18" y="6" width="2" height="2" fill="#8e8e8e"/><rect x="18" y="8" width="2" height="2" fill="#8e8e8e"/><rect x="18" y="10" width="2" height="2" fill="#8e8e8e"/><rect x="18" y="12" width="2" height="2" fill="#8e8e8e"/><rect x="4" y="2" width="2" height="2" fill="#8e8e8e"/><rect x="14" y="2" width="2" height="2" fill="#8e8e8e"/><rect x="2" y="4" width="2" height="2" fill="#8e8e8e"/><rect x="16" y="4" width="2" height="2" fill="#8e8e8e"/><rect x="2" y="14" width="2" height="2" fill="#8e8e8e"/><rect x="16" y="14" width="2" height="2" fill="#8e8e8e"/><rect x="4" y="16" width="2" height="2" fill="#8e8e8e"/><rect x="14" y="16" width="2" height="2" fill="#8e8e8e"/><rect x="4" y="0" width="2" height="2" fill="#555555"/><rect x="14" y="0" width="2" height="2" fill="#555555"/><rect x="4" y="18" width="2" height="2" fill="#555555"/><rect x="14" y="18" width="2" height="2" fill="#555555"/><rect x="0" y="4" width="2" height="2" fill="#555555"/><rect x="0" y="14" width="2" height="2" fill="#555555"/><rect x="18" y="4" width="2" height="2" fill="#555555"/><rect x="18" y="14" width="2" height="2" fill="#555555"/><rect x="2" y="2" width="2" height="2" fill="#555555"/><rect x="16" y="2" width="2" height="2" fill="#555555"/><rect x="2" y="16" width="2" height="2" fill="#555555"/><rect x="16" y="16" width="2" height="2" fill="#555555"/><rect x="6" y="2" width="2" height="2" fill="#555555"/><rect x="12" y="2" width="2" height="2" fill="#555555"/><rect x="6" y="16" width="2" height="2" fill="#555555"/><rect x="12" y="16" width="2" height="2" fill="#555555"/><rect x="2" y="6" width="2" height="2" fill="#555555"/><rect x="2" y="12" width="2" height="2" fill="#555555"/><rect x="16" y="6" width="2" height="2" fill="#555555"/><rect x="16" y="12" width="2" height="2" fill="#555555"/></svg><div class="t" style="left:162.80px;top:466.70px;color:#cccccc;transform:scaleX(0.9723);">WithNonDelegateType_ThrowsArgumentException</div><svg class="ic" style="left:136px;top:476px" width="20" height="20" shape-rendering="crispEdges"><rect x="6" y="0" width="2" height="2" fill="#8e8e8e"/><rect x="8" y="0" width="2" height="2" fill="#8e8e8e"/><rect x="10" y="0" width="2" height="2" fill="#8e8e8e"/><rect x="12" y="0" width="2" height="2" fill="#8e8e8e"/><rect x="6" y="18" width="2" height="2" fill="#8e8e8e"/><rect x="8" y="18" width="2" height="2" fill="#8e8e8e"/><rect x="10" y="18" width="2" height="2" fill="#8e8e8e"/><rect x="12" y="18" width="2" height="2" fill="#8e8e8e"/><rect x="0" y="6" width="2" height="2" fill="#8e8e8e"/><rect x="0" y="8" width="2" height="2" fill="#8e8e8e"/><rect x="0" y="10" width="2" height="2" fill="#8e8e8e"/><rect x="0" y="12" width="2" height="2" fill="#8e8e8e"/><rect x="18" y="6" width="2" height="2" fill="#8e8e8e"/><rect x="18" y="8" width="2" height="2" fill="#8e8e8e"/><rect x="18" y="10" width="2" height="2" fill="#8e8e8e"/><rect x="18" y="12" width="2" height="2" fill="#8e8e8e"/><rect x="4" y="2" width="2" height="2" fill="#8e8e8e"/><rect x="14" y="2" width="2" height="2" fill="#8e8e8e"/><rect x="2" y="4" width="2" height="2" fill="#8e8e8e"/><rect x="16" y="4" width="2" height="2" fill="#8e8e8e"/><rect x="2" y="14" width="2" height="2" fill="#8e8e8e"/><rect x="16" y="14" width="2" height="2" fill="#8e8e8e"/><rect x="4" y="16" width="2" height="2" fill="#8e8e8e"/><rect x="14" y="16" width="2" height="2" fill="#8e8e8e"/><rect x="4" y="0" width="2" height="2" fill="#555555"/><rect x="14" y="0" width="2" height="2" fill="#555555"/><rect x="4" y="18" width="2" height="2" fill="#555555"/><rect x="14" y="18" width="2" height="2" fill="#555555"/><rect x="0" y="4" width="2" height="2" fill="#555555"/><rect x="0" y="14" width="2" height="2" fill="#555555"/><rect x="18" y="4" width="2" height="2" fill="#555555"/><rect x="18" y="14" width="2" height="2" fill="#555555"/><rect x="2" y="2" width="2" height="2" fill="#555555"/><rect x="16" y="2" width="2" height="2" fill="#555555"/><rect x="2" y="16" width="2" height="2" fill="#555555"/><rect x="16" y="16" width="2" height="2" fill="#555555"/><rect x="6" y="2" width="2" height="2" fill="#555555"/><rect x="12" y="2" width="2" height="2" fill="#555555"/><rect x="6" y="16" width="2" height="2" fill="#555555"/><rect x="12" y="16" width="2" height="2" fill="#555555"/><rect x="2" y="6" width="2" height="2" fill="#555555"/><rect x="2" y="12" width="2" height="2" fill="#555555"/><rect x="16" y="6" width="2" height="2" fill="#555555"/><rect x="16" y="12" width="2" height="2" fill="#555555"/></svg><div class="t" style="left:162.80px;top:498.70px;color:#cccccc;transform:scaleX(0.9720);">WithNullDelegate_ThrowsArgumentNullException</div><svg class="ic" style="left:136px;top:508px" width="20" height="20" shape-rendering="crispEdges"><rect x="6" y="0" width="2" height="2" fill="#8e8e8e"/><rect x="8" y="0" width="2" height="2" fill="#8e8e8e"/><rect x="10" y="0" width="2" height="2" fill="#8e8e8e"/><rect x="12" y="0" width="2" height="2" fill="#8e8e8e"/><rect x="6" y="18" width="2" height="2" fill="#8e8e8e"/><rect x="8" y="18" width="2" height="2" fill="#8e8e8e"/><rect x="10" y="18" width="2" height="2" fill="#8e8e8e"/><rect x="12" y="18" width="2" height="2" fill="#8e8e8e"/><rect x="0" y="6" width="2" height="2" fill="#8e8e8e"/><rect x="0" y="8" width="2" height="2" fill="#8e8e8e"/><rect x="0" y="10" width="2" height="2" fill="#8e8e8e"/><rect x="0" y="12" width="2" height="2" fill="#8e8e8e"/><rect x="18" y="6" width="2" height="2" fill="#8e8e8e"/><rect x="18" y="8" width="2" height="2" fill="#8e8e8e"/><rect x="18" y="10" width="2" height="2" fill="#8e8e8e"/><rect x="18" y="12" width="2" height="2" fill="#8e8e8e"/><rect x="4" y="2" width="2" height="2" fill="#8e8e8e"/><rect x="14" y="2" width="2" height="2" fill="#8e8e8e"/><rect x="2" y="4" width="2" height="2" fill="#8e8e8e"/><rect x="16" y="4" width="2" height="2" fill="#8e8e8e"/><rect x="2" y="14" width="2" height="2" fill="#8e8e8e"/><rect x="16" y="14" width="2" height="2" fill="#8e8e8e"/><rect x="4" y="16" width="2" height="2" fill="#8e8e8e"/><rect x="14" y="16" width="2" height="2" fill="#8e8e8e"/><rect x="4" y="0" width="2" height="2" fill="#555555"/><rect x="14" y="0" width="2" height="2" fill="#555555"/><rect x="4" y="18" width="2" height="2" fill="#555555"/><rect x="14" y="18" width="2" height="2" fill="#555555"/><rect x="0" y="4" width="2" height="2" fill="#555555"/><rect x="0" y="14" width="2" height="2" fill="#555555"/><rect x="18" y="4" width="2" height="2" fill="#555555"/><rect x="18" y="14" width="2" height="2" fill="#555555"/><rect x="2" y="2" width="2" height="2" fill="#555555"/><rect x="16" y="2" width="2" height="2" fill="#555555"/><rect x="2" y="16" width="2" height="2" fill="#555555"/><rect x="16" y="16" width="2" height="2" fill="#555555"/><rect x="6" y="2" width="2" height="2" fill="#555555"/><rect x="12" y="2" width="2" height="2" fill="#555555"/><rect x="6" y="16" width="2" height="2" fill="#555555"/><rect x="12" y="16" width="2" height="2" fill="#555555"/><rect x="2" y="6" width="2" height="2" fill="#555555"/><rect x="2" y="12" width="2" height="2" fill="#555555"/><rect x="16" y="6" width="2" height="2" fill="#555555"/><rect x="16" y="12" width="2" height="2" fill="#555555"/></svg><div class="t" style="left:162.80px;top:530.70px;color:#cccccc;transform:scaleX(0.9677);">WithSimpleAllocation_ConstraintPasses</div><svg class="ic" style="left:136px;top:540px" width="20" height="20" shape-rendering="crispEdges"><rect x="6" y="0" width="2" height="2" fill="#8e8e8e"/><rect x="8" y="0" width="2" height="2" fill="#8e8e8e"/><rect x="10" y="0" width="2" height="2" fill="#8e8e8e"/><rect x="12" y="0" width="2" height="2" fill="#8e8e8e"/><rect x="6" y="18" width="2" height="2" fill="#8e8e8e"/><rect x="8" y="18" width="2" height="2" fill="#8e8e8e"/><rect x="10" y="18" width="2" height="2" fill="#8e8e8e"/><rect x="12" y="18" width="2" height="2" fill="#8e8e8e"/><rect x="0" y="6" width="2" height="2" fill="#8e8e8e"/><rect x="0" y="8" width="2" height="2" fill="#8e8e8e"/><rect x="0" y="10" width="2" height="2" fill="#8e8e8e"/><rect x="0" y="12" width="2" height="2" fill="#8e8e8e"/><rect x="18" y="6" width="2" height="2" fill="#8e8e8e"/><rect x="18" y="8" width="2" height="2" fill="#8e8e8e"/><rect x="18" y="10" width="2" height="2" fill="#8e8e8e"/><rect x="18" y="12" width="2" height="2" fill="#8e8e8e"/><rect x="4" y="2" width="2" height="2" fill="#8e8e8e"/><rect x="14" y="2" width="2" height="2" fill="#8e8e8e"/><rect x="2" y="4" width="2" height="2" fill="#8e8e8e"/><rect x="16" y="4" width="2" height="2" fill="#8e8e8e"/><rect x="2" y="14" width="2" height="2" fill="#8e8e8e"/><rect x="16" y="14" width="2" height="2" fill="#8e8e8e"/><rect x="4" y="16" width="2" height="2" fill="#8e8e8e"/><rect x="14" y="16" width="2" height="2" fill="#8e8e8e"/><rect x="4" y="0" width="2" height="2" fill="#555555"/><rect x="14" y="0" width="2" height="2" fill="#555555"/><rect x="4" y="18" width="2" height="2" fill="#555555"/><rect x="14" y="18" width="2" height="2" fill="#555555"/><rect x="0" y="4" width="2" height="2" fill="#555555"/><rect x="0" y="14" width="2" height="2" fill="#555555"/><rect x="18" y="4" width="2" height="2" fill="#555555"/><rect x="18" y="14" width="2" height="2" fill="#555555"/><rect x="2" y="2" width="2" height="2" fill="#555555"/><rect x="16" y="2" width="2" height="2" fill="#555555"/><rect x="2" y="16" width="2" height="2" fill="#555555"/><rect x="16" y="16" width="2" height="2" fill="#555555"/><rect x="6" y="2" width="2" height="2" fill="#555555"/><rect x="12" y="2" width="2" height="2" fill="#555555"/><rect x="6" y="16" width="2" height="2" fill="#555555"/><rect x="12" y="16" width="2" height="2" fill="#555555"/><rect x="2" y="6" width="2" height="2" fill="#555555"/><rect x="2" y="12" width="2" height="2" fill="#555555"/><rect x="16" y="6" width="2" height="2" fill="#555555"/><rect x="16" y="12" width="2" height="2" fill="#555555"/></svg><div class="t" style="left:134.28px;top:562.70px;color:#cccccc;transform:scaleX(0.9770);">ColorEqualityComparerTest (10 tests)</div><svg class="ic" style="left:108px;top:572px" width="20" height="20" shape-rendering="crispEdges"><rect x="6" y="0" width="2" height="2" fill="#8e8e8e"/><rect x="8" y="0" width="2" height="2" fill="#8e8e8e"/><rect x="10" y="0" width="2" height="2" fill="#8e8e8e"/><rect x="12" y="0" width="2" height="2" fill="#8e8e8e"/><rect x="6" y="18" width="2" height="2" fill="#8e8e8e"/><rect x="8" y="18" width="2" height="2" fill="#8e8e8e"/><rect x="10" y="18" width="2" height="2" fill="#8e8e8e"/><rect x="12" y="18" width="2" height="2" fill="#8e8e8e"/><rect x="0" y="6" width="2" height="2" fill="#8e8e8e"/><rect x="0" y="8" width="2" height="2" fill="#8e8e8e"/><rect x="0" y="10" width="2" height="2" fill="#8e8e8e"/><rect x="0" y="12" width="2" height="2" fill="#8e8e8e"/><rect x="18" y="6" width="2" height="2" fill="#8e8e8e"/><rect x="18" y="8" width="2" height="2" fill="#8e8e8e"/><rect x="18" y="10" width="2" height="2" fill="#8e8e8e"/><rect x="18" y="12" width="2" height="2" fill="#8e8e8e"/><rect x="4" y="2" width="2" height="2" fill="#8e8e8e"/><rect x="14" y="2" width="2" height="2" fill="#8e8e8e"/><rect x="2" y="4" width="2" height="2" fill="#8e8e8e"/><rect x="16" y="4" width="2" height="2" fill="#8e8e8e"/><rect x="2" y="14" width="2" height="2" fill="#8e8e8e"/><rect x="16" y="14" width="2" height="2" fill="#8e8e8e"/><rect x="4" y="16" width="2" height="2" fill="#8e8e8e"/><rect x="14" y="16" width="2" height="2" fill="#8e8e8e"/><rect x="4" y="0" width="2" height="2" fill="#555555"/><rect x="14" y="0" width="2" height="2" fill="#555555"/><rect x="4" y="18" width="2" height="2" fill="#555555"/><rect x="14" y="18" width="2" height="2" fill="#555555"/><rect x="0" y="4" width="2" height="2" fill="#555555"/><rect x="0" y="14" width="2" height="2" fill="#555555"/><rect x="18" y="4" width="2" height="2" fill="#555555"/><rect x="18" y="14" width="2" height="2" fill="#555555"/><rect x="2" y="2" width="2" height="2" fill="#555555"/><rect x="16" y="2" width="2" height="2" fill="#555555"/><rect x="2" y="16" width="2" height="2" fill="#555555"/><rect x="16" y="16" width="2" height="2" fill="#555555"/><rect x="6" y="2" width="2" height="2" fill="#555555"/><rect x="12" y="2" width="2" height="2" fill="#555555"/><rect x="6" y="16" width="2" height="2" fill="#555555"/><rect x="12" y="16" width="2" height="2" fill="#555555"/><rect x="2" y="6" width="2" height="2" fill="#555555"/><rect x="2" y="12" width="2" height="2" fill="#555555"/><rect x="16" y="6" width="2" height="2" fill="#555555"/><rect x="16" y="12" width="2" height="2" fill="#555555"/></svg><svg class="ic" style="left:74px;top:573.0px" width="18" height="16"><polygon points="0,0 18,0 9,15.3" fill="#6d6d6d"/></svg><div class="t" style="left:161.58px;top:594.70px;color:#cccccc;transform:scaleX(0.9788);">ColorsAreEqual (4 tests)</div><svg class="ic" style="left:136px;top:604px" width="20" height="20" shape-rendering="crispEdges"><rect x="6" y="0" width="2" height="2" fill="#8e8e8e"/><rect x="8" y="0" width="2" height="2" fill="#8e8e8e"/><rect x="10" y="0" width="2" height="2" fill="#8e8e8e"/><rect x="12" y="0" width="2" height="2" fill="#8e8e8e"/><rect x="6" y="18" width="2" height="2" fill="#8e8e8e"/><rect x="8" y="18" width="2" height="2" fill="#8e8e8e"/><rect x="10" y="18" width="2" height="2" fill="#8e8e8e"/><rect x="12" y="18" width="2" height="2" fill="#8e8e8e"/><rect x="0" y="6" width="2" height="2" fill="#8e8e8e"/><rect x="0" y="8" width="2" height="2" fill="#8e8e8e"/><rect x="0" y="10" width="2" height="2" fill="#8e8e8e"/><rect x="0" y="12" width="2" height="2" fill="#8e8e8e"/><rect x="18" y="6" width="2" height="2" fill="#8e8e8e"/><rect x="18" y="8" width="2" height="2" fill="#8e8e8e"/><rect x="18" y="10" width="2" height="2" fill="#8e8e8e"/><rect x="18" y="12" width="2" height="2" fill="#8e8e8e"/><rect x="4" y="2" width="2" height="2" fill="#8e8e8e"/><rect x="14" y="2" width="2" height="2" fill="#8e8e8e"/><rect x="2" y="4" width="2" height="2" fill="#8e8e8e"/><rect x="16" y="4" width="2" height="2" fill="#8e8e8e"/><rect x="2" y="14" width="2" height="2" fill="#8e8e8e"/><rect x="16" y="14" width="2" height="2" fill="#8e8e8e"/><rect x="4" y="16" width="2" height="2" fill="#8e8e8e"/><rect x="14" y="16" width="2" height="2" fill="#8e8e8e"/><rect x="4" y="0" width="2" height="2" fill="#555555"/><rect x="14" y="0" width="2" height="2" fill="#555555"/><rect x="4" y="18" width="2" height="2" fill="#555555"/><rect x="14" y="18" width="2" height="2" fill="#555555"/><rect x="0" y="4" width="2" height="2" fill="#555555"/><rect x="0" y="14" width="2" height="2" fill="#555555"/><rect x="18" y="4" width="2" height="2" fill="#555555"/><rect x="18" y="14" width="2" height="2" fill="#555555"/><rect x="2" y="2" width="2" height="2" fill="#555555"/><rect x="16" y="2" width="2" height="2" fill="#555555"/><rect x="2" y="16" width="2" height="2" fill="#555555"/><rect x="16" y="16" width="2" height="2" fill="#555555"/><rect x="6" y="2" width="2" height="2" fill="#555555"/><rect x="12" y="2" width="2" height="2" fill="#555555"/><rect x="6" y="16" width="2" height="2" fill="#555555"/><rect x="12" y="16" width="2" height="2" fill="#555555"/><rect x="2" y="6" width="2" height="2" fill="#555555"/><rect x="2" y="12" width="2" height="2" fill="#555555"/><rect x="16" y="6" width="2" height="2" fill="#555555"/><rect x="16" y="12" width="2" height="2" fill="#555555"/></svg><svg class="ic" style="left:102px;top:605.0px" width="18" height="16"><polygon points="0,0 18,0 9,15.3" fill="#6d6d6d"/></svg><div class="t" style="left:190.09px;top:626.70px;color:#cccccc;transform:scaleX(0.9645);">ColorsAreEqual(RGBA(0.000, 0.000, 0.000, 1.000),RGBA(0.000, 0.000, 0.000, 1.000),UnityEngine.TestTools.Utils.ColorEqualityComparer)</div><svg class="ic" style="left:164px;top:636px" width="20" height="20" shape-rendering="crispEdges"><rect x="6" y="0" width="2" height="2" fill="#8e8e8e"/><rect x="8" y="0" width="2" height="2" fill="#8e8e8e"/><rect x="10" y="0" width="2" height="2" fill="#8e8e8e"/><rect x="12" y="0" width="2" height="2" fill="#8e8e8e"/><rect x="6" y="18" width="2" height="2" fill="#8e8e8e"/><rect x="8" y="18" width="2" height="2" fill="#8e8e8e"/><rect x="10" y="18" width="2" height="2" fill="#8e8e8e"/><rect x="12" y="18" width="2" height="2" fill="#8e8e8e"/><rect x="0" y="6" width="2" height="2" fill="#8e8e8e"/><rect x="0" y="8" width="2" height="2" fill="#8e8e8e"/><rect x="0" y="10" width="2" height="2" fill="#8e8e8e"/><rect x="0" y="12" width="2" height="2" fill="#8e8e8e"/><rect x="18" y="6" width="2" height="2" fill="#8e8e8e"/><rect x="18" y="8" width="2" height="2" fill="#8e8e8e"/><rect x="18" y="10" width="2" height="2" fill="#8e8e8e"/><rect x="18" y="12" width="2" height="2" fill="#8e8e8e"/><rect x="4" y="2" width="2" height="2" fill="#8e8e8e"/><rect x="14" y="2" width="2" height="2" fill="#8e8e8e"/><rect x="2" y="4" width="2" height="2" fill="#8e8e8e"/><rect x="16" y="4" width="2" height="2" fill="#8e8e8e"/><rect x="2" y="14" width="2" height="2" fill="#8e8e8e"/><rect x="16" y="14" width="2" height="2" fill="#8e8e8e"/><rect x="4" y="16" width="2" height="2" fill="#8e8e8e"/><rect x="14" y="16" width="2" height="2" fill="#8e8e8e"/><rect x="4" y="0" width="2" height="2" fill="#555555"/><rect x="14" y="0" width="2" height="2" fill="#555555"/><rect x="4" y="18" width="2" height="2" fill="#555555"/><rect x="14" y="18" width="2" height="2" fill="#555555"/><rect x="0" y="4" width="2" height="2" fill="#555555"/><rect x="0" y="14" width="2" height="2" fill="#555555"/><rect x="18" y="4" width="2" height="2" fill="#555555"/><rect x="18" y="14" width="2" height="2" fill="#555555"/><rect x="2" y="2" width="2" height="2" fill="#555555"/><rect x="16" y="2" width="2" height="2" fill="#555555"/><rect x="2" y="16" width="2" height="2" fill="#555555"/><rect x="16" y="16" width="2" height="2" fill="#555555"/><rect x="6" y="2" width="2" height="2" fill="#555555"/><rect x="12" y="2" width="2" height="2" fill="#555555"/><rect x="6" y="16" width="2" height="2" fill="#555555"/><rect x="12" y="16" width="2" height="2" fill="#555555"/><rect x="2" y="6" width="2" height="2" fill="#555555"/><rect x="2" y="12" width="2" height="2" fill="#555555"/><rect x="16" y="6" width="2" height="2" fill="#555555"/><rect x="16" y="12" width="2" height="2" fill="#555555"/></svg><div class="t" style="left:190.09px;top:658.70px;color:#cccccc;transform:scaleX(0.9645);">ColorsAreEqual(RGBA(0.000, 0.000, 0.000, 1.000),RGBA(0.000, 0.000, 0.000, 1.000),UnityEngine.TestTools.Utils.ColorEqualityComparer)</div><svg class="ic" style="left:164px;top:668px" width="20" height="20" shape-rendering="crispEdges"><rect x="6" y="0" width="2" height="2" fill="#8e8e8e"/><rect x="8" y="0" width="2" height="2" fill="#8e8e8e"/><rect x="10" y="0" width="2" height="2" fill="#8e8e8e"/><rect x="12" y="0" width="2" height="2" fill="#8e8e8e"/><rect x="6" y="18" width="2" height="2" fill="#8e8e8e"/><rect x="8" y="18" width="2" height="2" fill="#8e8e8e"/><rect x="10" y="18" width="2" height="2" fill="#8e8e8e"/><rect x="12" y="18" width="2" height="2" fill="#8e8e8e"/><rect x="0" y="6" width="2" height="2" fill="#8e8e8e"/><rect x="0" y="8" width="2" height="2" fill="#8e8e8e"/><rect x="0" y="10" width="2" height="2" fill="#8e8e8e"/><rect x="0" y="12" width="2" height="2" fill="#8e8e8e"/><rect x="18" y="6" width="2" height="2" fill="#8e8e8e"/><rect x="18" y="8" width="2" height="2" fill="#8e8e8e"/><rect x="18" y="10" width="2" height="2" fill="#8e8e8e"/><rect x="18" y="12" width="2" height="2" fill="#8e8e8e"/><rect x="4" y="2" width="2" height="2" fill="#8e8e8e"/><rect x="14" y="2" width="2" height="2" fill="#8e8e8e"/><rect x="2" y="4" width="2" height="2" fill="#8e8e8e"/><rect x="16" y="4" width="2" height="2" fill="#8e8e8e"/><rect x="2" y="14" width="2" height="2" fill="#8e8e8e"/><rect x="16" y="14" width="2" height="2" fill="#8e8e8e"/><rect x="4" y="16" width="2" height="2" fill="#8e8e8e"/><rect x="14" y="16" width="2" height="2" fill="#8e8e8e"/><rect x="4" y="0" width="2" height="2" fill="#555555"/><rect x="14" y="0" width="2" height="2" fill="#555555"/><rect x="4" y="18" width="2" height="2" fill="#555555"/><rect x="14" y="18" width="2" height="2" fill="#555555"/><rect x="0" y="4" width="2" height="2" fill="#555555"/><rect x="0" y="14" width="2" height="2" fill="#555555"/><rect x="18" y="4" width="2" height="2" fill="#555555"/><rect x="18" y="14" width="2" height="2" fill="#555555"/><rect x="2" y="2" width="2" height="2" fill="#555555"/><rect x="16" y="2" width="2" height="2" fill="#555555"/><rect x="2" y="16" width="2" height="2" fill="#555555"/><rect x="16" y="16" width="2" height="2" fill="#555555"/><rect x="6" y="2" width="2" height="2" fill="#555555"/><rect x="12" y="2" width="2" height="2" fill="#555555"/><rect x="6" y="16" width="2" height="2" fill="#555555"/><rect x="12" y="16" width="2" height="2" fill="#555555"/><rect x="2" y="6" width="2" height="2" fill="#555555"/><rect x="2" y="12" width="2" height="2" fill="#555555"/><rect x="16" y="6" width="2" height="2" fill="#555555"/><rect x="16" y="12" width="2" height="2" fill="#555555"/></svg>
</div></div>
<div class="b" style="left:1935px;top:148px;width:2px;height:538px;background:#2f2f2f"></div>
<div class="b" style="left:1937px;top:148px;width:27px;height:538px;background:#373737"></div>
<svg class="ic" style="left:1941.5px;top:158.5px" width="16" height="11"><polygon points="0,9.8 14.6,9.8 7.3,0" fill="#c4c4c4"/></svg>
<div class="b" style="left:1939px;top:180px;width:20px;height:55px;background:#5f5f5f;border-radius:10px"></div>
<svg class="ic" style="left:1941.7px;top:666px" width="16" height="11"><polygon points="0,0 14.6,0 7.3,9" fill="#c4c4c4"/></svg>
<div class="b" style="left:0;top:688px;width:1964px;height:2px;background:#1f1f1f"></div>
<!-- footer -->
<div class="b" style="left:0;top:872px;width:1964px;height:40px;background:#3c3c3c"></div>
<div class="b" style="left:0;top:912px;width:1964px;height:2px;background:#1c1c1c"></div>
<div class="b" style="left:4px;top:876px;width:187px;height:37px;background:#363636;border-radius:5px"></div>
<div class="b" style="left:6px;top:878px;width:184px;height:34px;background:#4a4a4a;border-radius:4px"></div>
<div class="b" style="left:199px;top:876px;width:173px;height:37px;background:#2e2e2e;border-radius:5px"></div>
<div class="b" style="left:200px;top:878px;width:170px;height:34px;background:#585858;border-radius:4px"></div>
<div class="b" style="left:1507px;top:876px;width:165px;height:37px;background:#363636;border-radius:5px"></div>
<div class="b" style="left:1508.5px;top:878px;width:161.5px;height:34px;background:#4a4a4a;border-radius:4px"></div>
<div class="b" style="left:1678px;top:876px;width:174px;height:37px;background:#363636;border-radius:5px"></div>
<div class="b" style="left:1680px;top:878px;width:170px;height:34px;background:#4a4a4a;border-radius:4px"></div>
<div class="b" style="left:1858.5px;top:876px;width:101.5px;height:37px;background:#2e2e2e;border-radius:5px"></div>
<div class="b" style="left:1860px;top:878px;width:98px;height:34px;background:#585858;border-radius:4px"></div>
<div class="t" style="left:16.07px;top:879.10px;color:#999999;transform:scaleX(0.9669);">Export Results</div><div class="t" style="left:210.30px;top:879.10px;color:#e4e4e4;transform:scaleX(0.9561);">Clear Results</div><div class="t" style="left:1518.51px;top:879.10px;color:#999999;transform:scaleX(0.9460);">Rerun Failed</div><div class="t" style="left:1689.88px;top:879.10px;color:#999999;transform:scaleX(0.9607);">Run Selected</div><div class="t" style="left:1870.11px;top:879.10px;color:#e4e4e4;transform:scaleX(0.9465);">Run All</div>
</body></html>
